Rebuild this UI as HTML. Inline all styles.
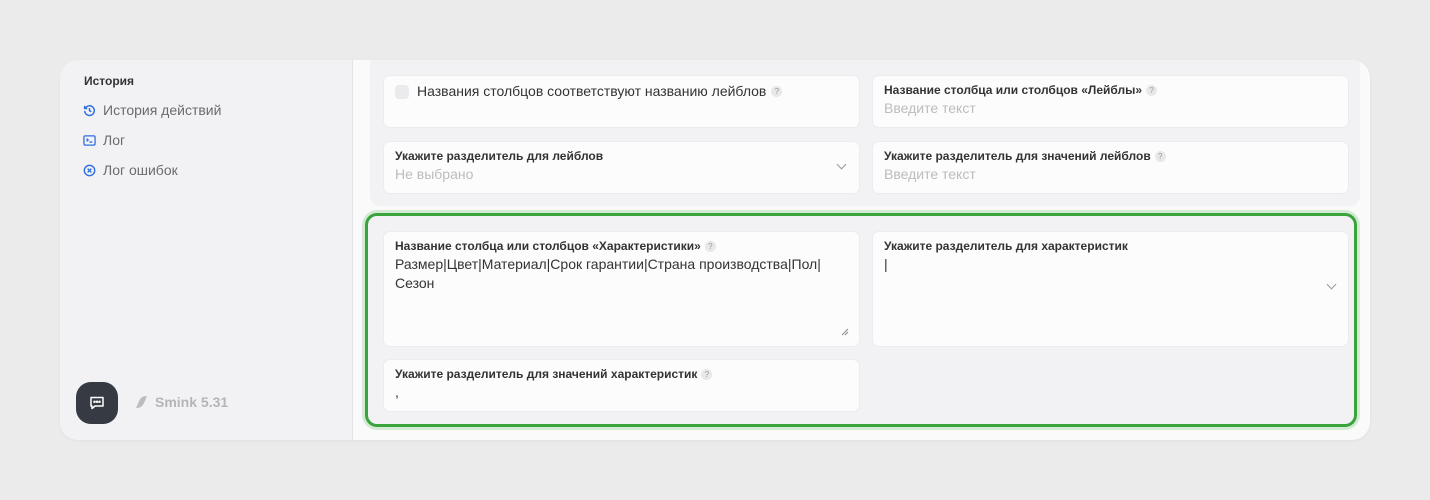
<!DOCTYPE html>
<html><head><meta charset="utf-8"><style>
*{box-sizing:border-box;margin:0;padding:0}
body{width:1430px;height:500px;background:#ebebeb;font-family:"Liberation Sans",sans-serif;position:relative;overflow:hidden}
.card{position:absolute;left:60px;top:60px;width:1310px;height:380px;border-radius:18px;background:#fafafa;overflow:hidden;box-shadow:0 1px 3px rgba(0,0,0,.05)}
.side{position:absolute;left:0;top:0;width:293px;height:380px;background:#f2f2f4;border-right:1px solid #e4e4e6}
.side h4{position:absolute;left:24px;top:14px;font-size:12px;font-weight:bold;color:#333}
.it{position:absolute;left:23px;font-size:14px;color:#6b6b70;display:flex;align-items:center;gap:7px}
.it svg{width:13px;height:13px}
.chat{position:absolute;left:16px;top:322px;width:42px;height:42px;border-radius:15px;background:#353a43;display:flex;align-items:center;justify-content:center}
.ver{position:absolute;left:75px;top:334px;font-size:14px;font-weight:bold;color:#b5b5b8;display:flex;gap:7px;align-items:center}
.panel{position:absolute;left:310px;top:-10px;width:990px;height:156px;background:#f2f2f4;border-radius:10px}
.green{position:absolute;left:305px;top:153px;width:992px;height:214px;border:3px solid #3aa33c;border-radius:12px;background:#f2f2f4;box-shadow:0 0 0 3px #d5ead5}
.f{position:absolute;background:#fcfcfc;border-radius:7px;border:1px solid #ececee}
.lb{position:absolute;left:11px;top:7px;font-size:12px;font-weight:bold;color:#333;display:flex;align-items:center;gap:4px;white-space:nowrap}
.q{display:inline-block;width:11px;height:11px;border-radius:50%;background:#e8e8ea;color:#999;font-size:8px;line-height:11px;text-align:center;font-weight:normal}
.v{position:absolute;left:11px;top:23px;font-size:14px;color:#333;line-height:19px}
.ph{color:#bcbcbf}
.chev{position:absolute;width:7px;height:7px;border-right:1.2px solid #999;border-bottom:1.2px solid #999;transform:rotate(45deg)}
</style></head><body>
<div class="card">
 <div class="side">
  <h4>История</h4>
  <div class="it" style="top:42px"><svg viewBox="0 0 14 14" fill="none" stroke="#2f6fe0" stroke-width="1.6"><path d="M2.5 4.5A5.2 5.2 0 1 1 1.8 7.5"/><path d="M1.8 2v2.8h2.8"/><path d="M7 4.3V7.2l2 1.2"/></svg>История действий</div>
  <div class="it" style="top:72px"><svg viewBox="0 0 14 14" fill="none" stroke="#2f6fe0" stroke-width="1.4"><rect x="1" y="2" width="12" height="10" rx="1.5"/><path d="M3.8 5l1.8 1.5-1.8 1.5M7 8.7h3"/></svg>Лог</div>
  <div class="it" style="top:102px"><svg viewBox="0 0 14 14" fill="none" stroke="#2f6fe0" stroke-width="1.5"><circle cx="7" cy="7" r="5.6"/><path d="M5 5l4 4M9 5l-4 4"/></svg>Лог ошибок</div>
  <div class="chat"><svg width="18" height="18" viewBox="0 0 18 18" fill="none" stroke="#fff" stroke-width="1.5"><path d="M3 3.5h12v8.5H7l-3 2.5V12H3z" stroke-linejoin="round"/><circle cx="6.5" cy="7.8" r=".5" fill="#fff"/><circle cx="9" cy="7.8" r=".5" fill="#fff"/><circle cx="11.5" cy="7.8" r=".5" fill="#fff"/></svg></div>
  <div class="ver"><svg width="13" height="14" viewBox="0 0 13 14"><path d="M1 13L4 6C5.5 2.5 8 1 12 1L9 8C7.5 11.5 5 13 1 13z" fill="#bdbdc0"/></svg>Smink 5.31</div>
 </div>
 <div class="panel">
  <div class="f" style="left:13px;top:25px;width:477px;height:53px">
   <div style="position:absolute;left:11px;top:9px;width:14px;height:14px;border-radius:4px;background:#ebebed"></div>
   <div style="position:absolute;left:33px;top:7px;font-size:14px;color:#333;display:flex;align-items:center;gap:5px">Названия столбцов соответствуют названию лейблов <span class="q">?</span></div>
  </div>
  <div class="f" style="left:502px;top:25px;width:477px;height:53px"><div class="lb">Название столбца или столбцов «Лейблы» <span class="q">?</span></div><div class="v ph">Введите текст</div></div>
  <div class="f" style="left:13px;top:91px;width:477px;height:53px"><div class="lb">Укажите разделитель для лейблов</div><div class="v ph">Не выбрано</div><div class="chev" style="left:454px;top:19px"></div></div>
  <div class="f" style="left:502px;top:91px;width:477px;height:53px"><div class="lb">Укажите разделитель для значений лейблов <span class="q">?</span></div><div class="v ph">Введите текст</div></div>
 </div>
 <div class="green">
  <div class="f" style="left:15px;top:15px;width:477px;height:116px"><div class="lb">Название столбца или столбцов «Характеристики» <span class="q">?</span></div><div class="v">Размер|Цвет|Материал|Срок гарантии|Страна производства|Пол|<br>Сезон</div>
   <svg style="position:absolute;right:10px;bottom:10px" width="8" height="8" viewBox="0 0 8 8" stroke="#888" stroke-width="1"><path d="M1 7L7 1M4 7L7 4"/></svg></div>
  <div class="f" style="left:504px;top:15px;width:477px;height:116px"><div class="lb">Укажите разделитель для характеристик</div><div class="v">|</div><div class="chev" style="left:455px;top:49px"></div></div>
  <div class="f" style="left:15px;top:143px;width:477px;height:53px"><div class="lb">Укажите разделитель для значений характеристик <span class="q">?</span></div><div class="v">,</div></div>
 </div>
</div>
</body></html>
